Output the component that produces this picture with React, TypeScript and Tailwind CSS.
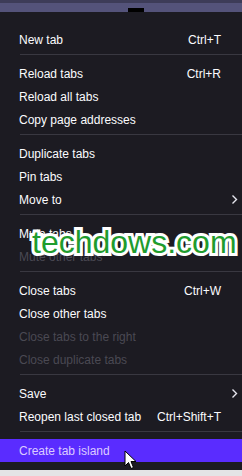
import React from "react";

type Item =
  | { kind: "sep" }
  | {
      kind: "item";
      label: string;
      shortcut?: string;
      submenu?: boolean;
      disabled?: boolean;
      active?: boolean;
    };

const items: Item[] = [
  { kind: "item", label: "New tab", shortcut: "Ctrl+T" },
  { kind: "sep" },
  { kind: "item", label: "Reload tabs", shortcut: "Ctrl+R" },
  { kind: "item", label: "Reload all tabs" },
  { kind: "item", label: "Copy page addresses" },
  { kind: "sep" },
  { kind: "item", label: "Duplicate tabs" },
  { kind: "item", label: "Pin tabs" },
  { kind: "item", label: "Move to", submenu: true },
  { kind: "sep" },
  { kind: "item", label: "Mute tabs" },
  { kind: "item", label: "Mute other tabs", disabled: true },
  { kind: "sep" },
  { kind: "item", label: "Close tabs", shortcut: "Ctrl+W" },
  { kind: "item", label: "Close other tabs" },
  { kind: "item", label: "Close tabs to the right", disabled: true },
  { kind: "item", label: "Close duplicate tabs", disabled: true },
  { kind: "sep" },
  { kind: "item", label: "Save", submenu: true },
  { kind: "item", label: "Reopen last closed tab", shortcut: "Ctrl+Shift+T" },
  { kind: "sep" },
  { kind: "item", label: "Create tab island", active: true },
];

function Chevron() {
  return (
    <svg width="7" height="11" viewBox="0 0 7 11" className="shrink-0">
      <path d="M1.5 1.5 L5.5 5.5 L1.5 9.5" fill="none" stroke="#e6e6ee" strokeWidth="1.4" />
    </svg>
  );
}

function Cursor() {
  return (
    <svg width="14" height="20" viewBox="0 0 14 20" className="absolute left-[124px] top-[450px]">
      <path
        d="M1 1 L1 16 L4.5 12.5 L7 18.5 L9.5 17.5 L7 11.5 L12 11.5 Z"
        fill="#ffffff"
        stroke="#000000"
        strokeWidth="1"
        strokeLinejoin="round"
      />
    </svg>
  );
}

export default function App() {
  return (
    <div
      className="relative w-[242px] h-[476px] overflow-hidden bg-[#1c1b22]"
      style={{ fontFamily: '"Liberation Sans", Arial, sans-serif' }}
    >
      {/* blurred tab strip behind the menu */}
      <div className="h-[12px] flex flex-col">
        <div className="h-[3px] bg-[#3d3c58]" />
        <div className="relative h-[9px] bg-[#54537a]">
          <div className="absolute left-[128px] top-[5px] w-[16px] h-[4px] bg-black" />
        </div>
      </div>

      <div className="flex flex-col pt-[16px] text-[12px] text-[#fbfbfe]">
        {items.map((it, i) =>
          it.kind === "sep" ? (
            <div key={i} className="h-[11px] pt-[3px] pl-[20px]">
              <div className="h-px bg-[#393841]" />
            </div>
          ) : (
            <div
              key={i}
              className={`flex h-[23px] items-center pl-[19px] pr-[4px] ${
                it.active ? "bg-[#5a2cff] text-[#dccbff]" : ""
              } ${it.disabled ? "text-[#4a4953]" : ""}`}
            >
              <span className="flex-1 whitespace-nowrap">{it.label}</span>
              {it.shortcut && <span className="whitespace-nowrap pr-[17px]">{it.shortcut}</span>}
              {it.submenu && <Chevron />}
            </div>
          )
        )}
      </div>

      <div className="absolute left-0 right-0 bottom-0 h-[6px] bg-[#e4e4e6]" />

      {/* watermark */}
      <div
        className="absolute left-[32px] top-[226px] text-[32px] leading-none text-[#1f9c2e] whitespace-nowrap"
        style={{
          fontFamily: '"Liberation Sans", Arial, sans-serif',
          WebkitTextStroke: "6px #ffffff",
          paintOrder: "stroke fill",
        }}
      >
        techdows.com
      </div>

      <Cursor />
    </div>
  );
}
